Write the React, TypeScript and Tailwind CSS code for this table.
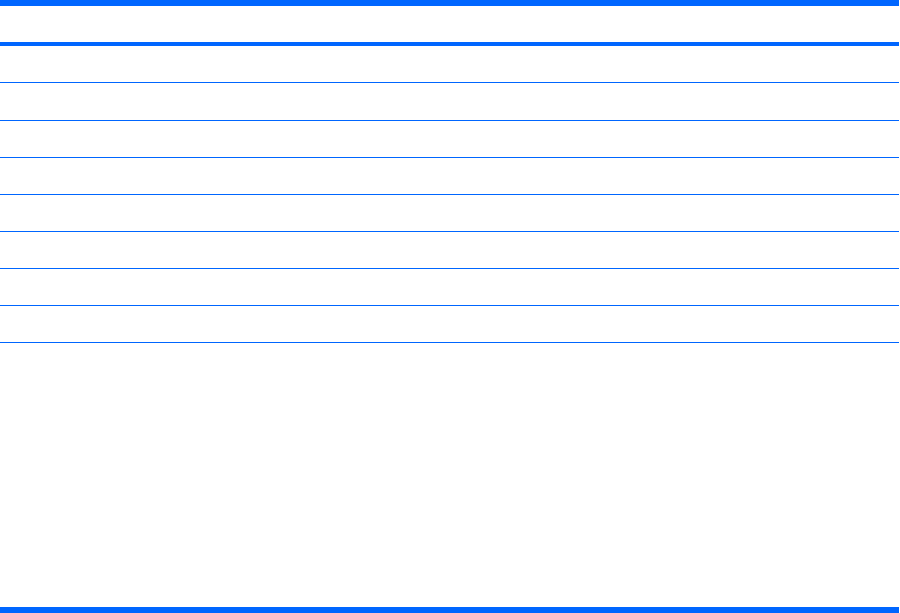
const rowHeights = ["h-[37px]", "h-[38px]", "h-[37px]", "h-[37px]", "h-[37px]", "h-[37px]", "h-[37px]", "h-[37px]"];

export default function App() {
  return (
    <div className="flex h-[613px] w-[900px] flex-col bg-white font-['Liberation_Sans',sans-serif]">
      <div className="w-[899px]">
        <div className="h-[6px] bg-[#0066ff]" />
        <div className="h-[36px]" />
        <div className="h-[4px] bg-[#0066ff]" />
        {rowHeights.map((h, i) => (
          <div key={i} className={`${h} border-b border-[#0066ff]`} />
        ))}
      </div>
      <div className="flex-1" />
      <div className="h-[6px] w-[899px] bg-[#0066ff]" />
    </div>
  );
}
